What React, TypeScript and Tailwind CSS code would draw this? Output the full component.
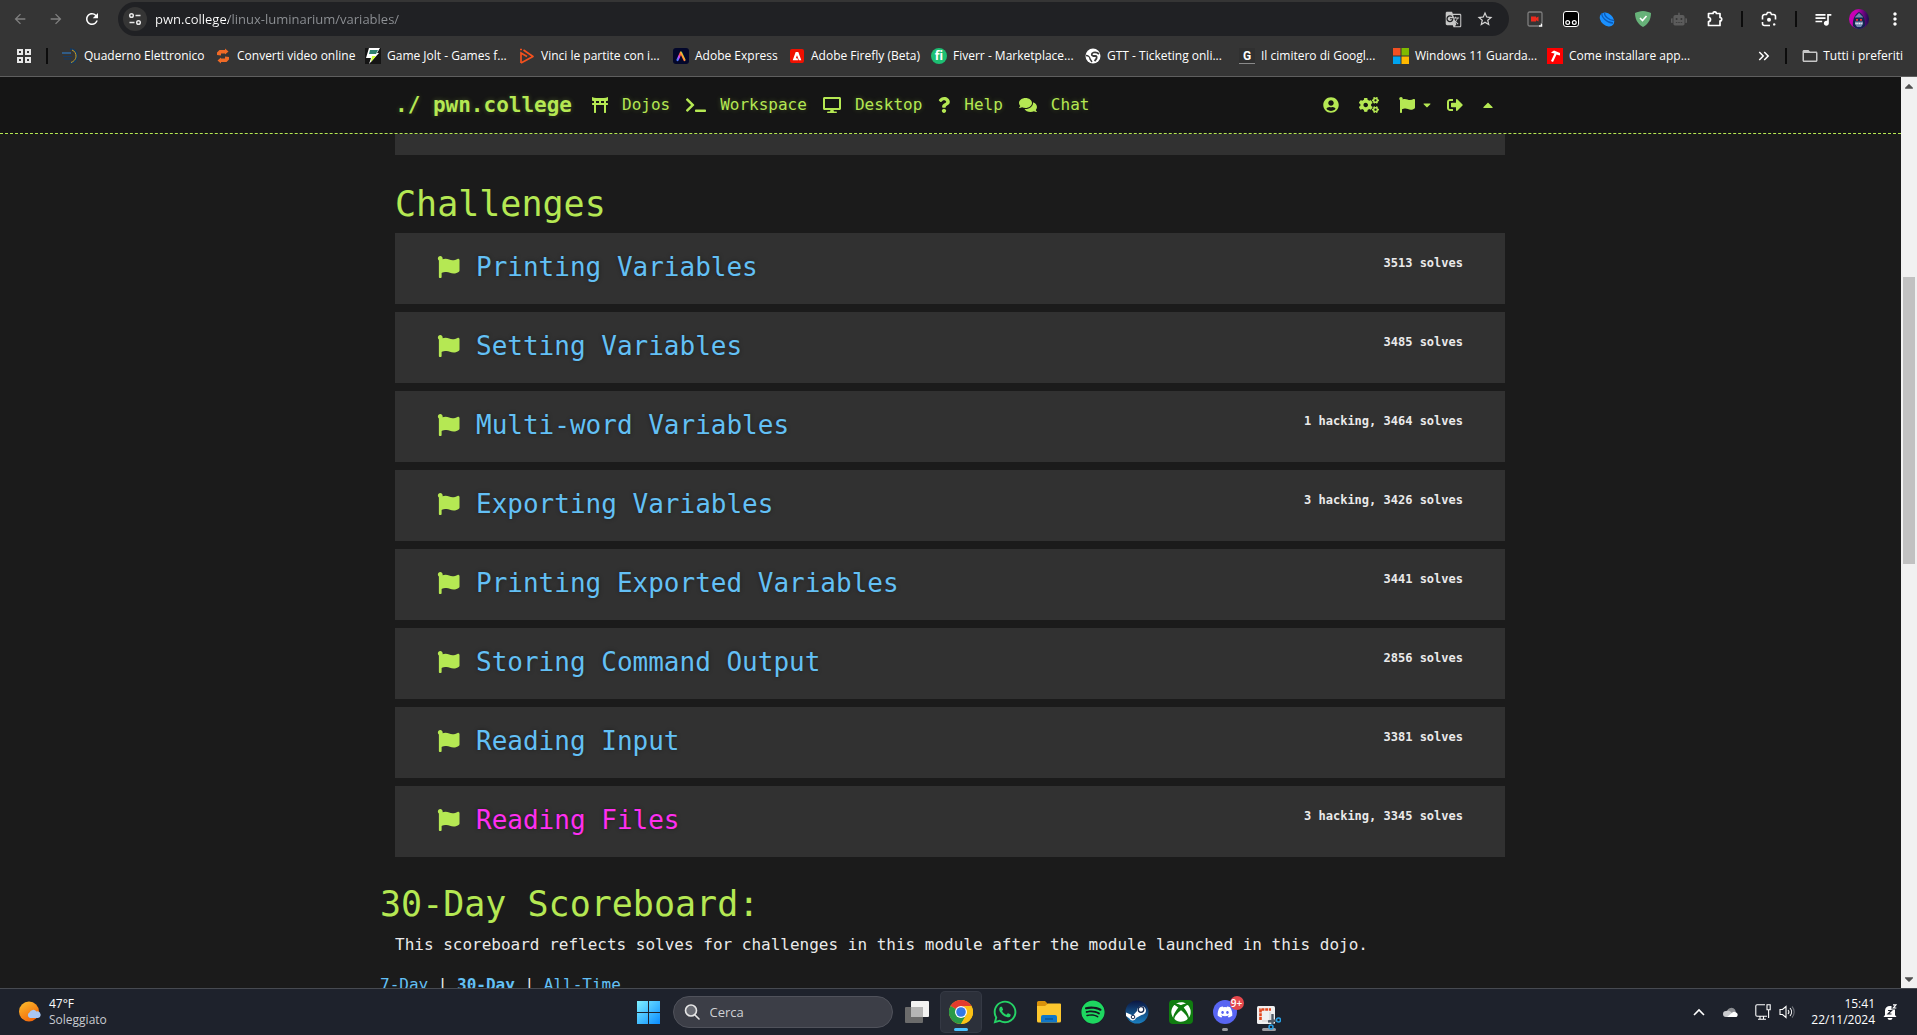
import React from "react";
import {
  FaToriiGate, FaTerminal, FaDesktop, FaQuestion, FaComments, FaUserCircle, FaCogs,
  FaFlag, FaSignOutAlt, FaCaretDown, FaCaretUp, FaWhatsapp, FaSpotify, FaDiscord,
  FaXbox, FaRobot,
} from "react-icons/fa";
import {
  MdArrowBack, MdArrowForward, MdRefresh, MdGTranslate, MdStarBorder,
  MdQueueMusic, MdMoreVert, MdKeyboardDoubleArrowRight, MdFolderOpen,
} from "react-icons/md";

const challenges = [
  { name: "Printing Variables", stats: "3513 solves" },
  { name: "Setting Variables", stats: "3485 solves" },
  { name: "Multi-word Variables", stats: "1 hacking, 3464 solves" },
  { name: "Exporting Variables", stats: "3 hacking, 3426 solves" },
  { name: "Printing Exported Variables", stats: "3441 solves" },
  { name: "Storing Command Output", stats: "2856 solves" },
  { name: "Reading Input", stats: "3381 solves" },
  { name: "Reading Files", stats: "3 hacking, 3345 solves", active: true },
];

function QuadernoIcon() {
  return (
    <svg viewBox="0 0 16 16" className="size-4" fill="none">
      <path d="M8 1c5 0 7 3 7 7s-2 7-7 7" stroke="#123a66" strokeWidth="1.5" />
      <path d="M10 2c3 1 4 4 4 6s-1 5-5 6.500" stroke="#c9a227" strokeWidth="1" />
      <path d="M0 5h9" stroke="#2f78c0" strokeWidth="1.200" />
      <path d="M1 8.500h9M2 11h7" stroke="#173b63" strokeWidth="1.200" />
    </svg>
  );
}
function ConvertIcon() {
  return (
    <svg viewBox="0 0 16 16" className="size-4" fill="#f06a26">
      <path d="M2 4.500L4.500 2H10V.5l3.500 3L10 6.500V5.500H6v2L2 7z" />
      <path d="M14 11.500L11.500 14H6v1.500L2.500 12.500 6 9.500v1h4V8.500l4 .5z" />
    </svg>
  );
}
function JoltIcon() {
  return (
    <svg viewBox="0 0 16 16" className="size-4">
      <rect width="16" height="16" fill="#151515" />
      <path d="M4 0h11l-3 5h2L4 16l2-6H1z" fill="#fff" />
      <path d="M5 2h8l-2 4H4z" fill="#2f7f6f" />
      <path d="M7 8h4l-5 6z" fill="#cf3" />
    </svg>
  );
}
function VinciIcon() {
  return (
    <svg viewBox="0 0 16 16" className="size-4" fill="none" stroke="#f4511e" strokeWidth="1.700">
      <path d="M2 15V5l6 3.500" />
      <path d="M2 15l12-6.500L4.500 2" strokeLinejoin="round" />
      <path d="M1 1.500h2" />
    </svg>
  );
}
function ExpressIcon() {
  return (
    <svg viewBox="0 0 16 16" className="size-4">
      <defs>
        <linearGradient id="adx" x1="0" y1="1" x2="1" y2="0.400">
          <stop offset="0" stopColor="#4d7bff" />
          <stop offset="0.350" stopColor="#c84bff" />
          <stop offset="0.550" stopColor="#ff4b4b" />
          <stop offset="0.800" stopColor="#ffb02e" />
          <stop offset="1" stopColor="#33d17a" />
        </linearGradient>
      </defs>
      <rect width="16" height="16" rx="3" fill="#03072b" />
      <path d="M4.500 12L8 4.500l3.500 7.500" fill="none" stroke="url(#adx)" strokeWidth="2.200" strokeLinecap="round" strokeLinejoin="round" />
    </svg>
  );
}
function FireflyIcon() {
  return (
    <svg viewBox="0 0 16 16" className="size-4">
      <rect x="1" y="1" width="14" height="14" rx="2" fill="#f01000" />
      <path d="M6.700 4h2.600l3 8.200H9.900L8 7.300l-1.200 3h1.600l.8 1.900H3.700z" fill="#fff" />
    </svg>
  );
}
function FiverrIcon() {
  return (
    <span className="flex size-4 items-center justify-center rounded-full bg-[#1dbf73] font-['Open_Sans'] text-[12px] leading-4 font-bold text-white">fi</span>
  );
}
function GlobeIcon() {
  return (
    <svg viewBox="0 0 16 16" className="size-4">
      <circle cx="8" cy="8" r="7.500" fill="#fff" />
      <path d="M14 6c-2-2-3.500-2-5.500-1.500S6 7.500 8 8h3c1.500 1 .5 3-1.500 5" fill="none" stroke="#3a3a3a" strokeWidth="1.800" />
      <path d="M1 7.500c2 0 4 1.500 4 3.500l2 3" fill="none" stroke="#3a3a3a" strokeWidth="1.400" />
    </svg>
  );
}
function GraveIcon() {
  return (
    <span className="flex size-4 items-center justify-center border-b border-[#8a8a8a] bg-[#303030] font-['Roboto'] text-[12px] leading-none font-bold text-white">G</span>
  );
}
function MicrosoftIcon() {
  return (
    <svg viewBox="0 0 16 16" className="size-4">
      <path d="M0 0h7.500v7.500H0z" fill="#f25022" />
      <path d="M8.500 0H16v7.500H8.500z" fill="#7fba00" />
      <path d="M0 8.500h7.500V16H0z" fill="#00a4ef" />
      <path d="M8.500 8.500H16V16H8.500z" fill="#ffb900" />
    </svg>
  );
}
function HammerIcon() {
  return (
    <svg viewBox="0 0 16 16" className="size-4">
      <rect width="16" height="16" fill="#ff0000" />
      <path d="M4 4.500L7 2.500l6 2.500v2.500L11 7 9.500 6.500 6 14l-2-1 3.500-7.500L5 5z" fill="#fff" />
    </svg>
  );
}

const bookmarks = [
  { label: "Quaderno Elettronico", icon: <QuadernoIcon />, width: "w-[153px]" },
  { label: "Converti video online", icon: <ConvertIcon />, width: "w-[150px]" },
  { label: "Game Jolt - Games f...", icon: <JoltIcon />, width: "w-[154px]" },
  { label: "Vinci le partite con i...", icon: <VinciIcon />, width: "w-[154px]" },
  { label: "Adobe Express", icon: <ExpressIcon />, width: "w-[116px]" },
  { label: "Adobe Firefly (Beta)", icon: <FireflyIcon />, width: "w-[142px]" },
  { label: "Fiverr - Marketplace...", icon: <FiverrIcon />, width: "w-[154px]" },
  { label: "GTT - Ticketing onli...", icon: <GlobeIcon />, width: "w-[154px]" },
  { label: "Il cimitero di Googl...", icon: <GraveIcon />, width: "w-[154px]" },
  { label: "Windows 11 Guarda...", icon: <MicrosoftIcon />, width: "w-[154px]" },
  { label: "Come installare app...", icon: <HammerIcon />, width: "w-[154px]" },
];

function ToolButton({ label, children }: { label: string; children: React.ReactNode }) {
  return (
    <button type="button" aria-label={label} className="flex h-8 w-9 shrink-0 items-center justify-center">
      {children}
    </button>
  );
}

function BrowserChrome() {
  return (
    <div className="shrink-0 border-b border-[#5f5f5f] bg-[#353535] font-['Open_Sans',sans-serif] text-white">
      <div className="flex h-[38px] items-center pr-1 pl-0.5">
        <ToolButton label="Indietro"><MdArrowBack className="size-4 text-[#808080]" /></ToolButton>
        <ToolButton label="Avanti"><MdArrowForward className="size-4 text-[#808080]" /></ToolButton>
        <ToolButton label="Ricarica"><MdRefresh className="size-[18px]" /></ToolButton>
        <div className="ml-2 flex h-[34px] min-w-0 flex-1 items-center rounded-full bg-[#202124] pr-2 pl-[5px]">
          <button type="button" aria-label="Informazioni sul sito" className="flex size-6 shrink-0 items-center justify-center rounded-full bg-[#353535]">
            <svg viewBox="0 0 16 16" className="size-4" fill="none" stroke="#e8e8e8" strokeWidth="1.500">
              <circle cx="4.500" cy="4.500" r="1.800" />
              <path d="M8.500 4.500h5M2.500 11.500h5" />
              <circle cx="11.500" cy="11.500" r="1.800" />
            </svg>
          </button>
          <input
            aria-label="Barra degli indirizzi"
            defaultValue="pwn.college/linux-luminarium/variables/"
            className="ml-2 min-w-0 flex-1 bg-[linear-gradient(90deg,#ffffff_74px,#8f9296_74px)] bg-clip-text text-[13px] leading-5 text-transparent outline-none"
          />
          <button type="button" aria-label="Traduci" className="flex size-8 items-center justify-center"><MdGTranslate className="size-[17px] text-[#c7c7c7]" /></button>
          <button type="button" aria-label="Aggiungi ai preferiti" className="flex size-8 items-center justify-center"><MdStarBorder className="size-[18px] text-[#d5d5d5]" /></button>
        </div>
        <div className="ml-2 flex items-center">
          <ToolButton label="Registratore">
            <svg viewBox="0 0 16 16" className="size-4" fill="none">
              <path d="M12 15H2.500A1.500 1.500 0 011 13.500v-11A1.500 1.500 0 012.500 1h11A1.500 1.500 0 0115 2.500V12" stroke="#7d7d7d" strokeWidth="1.300" />
              <path d="M12 15h2.500v-2.500" stroke="#fff" strokeWidth="1.500" />
              <path d="M4 5.500h5v1.200l2.500-1.200v5L9 9.300v1.200H4z" fill="#ee2a1d" />
            </svg>
          </ToolButton>
          <ToolButton label="Tampermonkey">
            <svg viewBox="0 0 16 16" className="size-4" fill="none">
              <rect x="0.500" y="0.500" width="15" height="15" rx="2.500" fill="#000" stroke="#fff" />
              <circle cx="4.700" cy="11.500" r="1.900" stroke="#fff" strokeWidth="1.200" />
              <circle cx="11.300" cy="11.500" r="1.900" stroke="#fff" strokeWidth="1.200" />
            </svg>
          </ToolButton>
          <ToolButton label="Estensione">
            <svg viewBox="0 0 16 16" className="size-4">
              <ellipse cx="8" cy="8.500" rx="8" ry="6" transform="rotate(40 8 8.500)" fill="#1a90ff" />
              <path d="M3 2c-1 4 5 10 11 10M5.500 1.500C5 5 10 9.500 15 9.500" stroke="#0c5cb8" strokeWidth="1.300" fill="none" />
            </svg>
          </ToolButton>
          <ToolButton label="AdGuard">
            <svg viewBox="0 0 16 16" className="size-4">
              <path d="M8 0c3 .3 5.500 1 8 2-.2 6-2 10.500-8 14C2 12.500.2 8 0 2c2.500-1 5-1.700 8-2z" fill="#67b279" />
              <path d="M5 7l2.500 2.500L11.500 5" stroke="#fff" strokeWidth="1.600" fill="none" />
            </svg>
          </ToolButton>
          <ToolButton label="Robot"><FaRobot className="size-4 text-[#5c5c5c]" /></ToolButton>
          <ToolButton label="Estensioni">
            <svg viewBox="0 0 16 16" className="size-4" fill="none" stroke="#fff" strokeWidth="1.700" strokeLinejoin="round">
              <path d="M1.500 2.500H6a1.700 1.700 0 013.400 0h3.600v4a1.700 1.700 0 010 3.400v4.600H1.500v-4a2 2 0 000-4z" />
            </svg>
          </ToolButton>
          <span className="mx-2 h-4 w-0.5 bg-[#0c0c0c]" />
          <ToolButton label="Cerca con Lens">
            <svg viewBox="0 0 16 16" className="size-4" fill="none" stroke="#fff" strokeWidth="1.600">
              <path d="M1.500 8.500V5.500a2 2 0 012-2h2l1-2h3l1 2h2a2 2 0 012 2v3M1.500 11v1.500a2 2 0 002 2H9" />
              <circle cx="8" cy="8.700" r="2" fill="#fff" stroke="none" />
              <circle cx="13.200" cy="13.400" r="1.200" fill="#fff" stroke="none" />
            </svg>
          </ToolButton>
          <span className="mx-2 h-4 w-0.5 bg-[#0c0c0c]" />
          <ToolButton label="Controlli multimediali"><MdQueueMusic className="size-5" /></ToolButton>
          <ToolButton label="Profilo">
            <svg viewBox="0 0 20 20" className="size-5">
              <defs>
                <linearGradient id="av" x1="0" x2="1"><stop offset="0.400" stopColor="#c800b4" /><stop offset="1" stopColor="#1b0b50" /></linearGradient>
              </defs>
              <circle cx="10" cy="10" r="10" fill="url(#av)" />
              <path d="M4 17c-1-6 2-12 6-14 4 2 7 8 6 14-3 4-9 4-12 0z" fill="#15254f" />
              <path d="M6 8l4-4 4 4v7l-2 3H8l-2-3z" fill="#7288ae" />
              <path d="M5.500 8.500h9v4h-9z" fill="#15254f" />
              <path d="M7 10h2v1.700H7zM11 10h2v1.700h-2z" fill="#ef3030" />
              <path d="M6.500 14.500h7" stroke="#eef2f8" strokeWidth="1.700" strokeDasharray="1.200 .5" />
            </svg>
          </ToolButton>
          <ToolButton label="Menu"><MdMoreVert className="size-5" /></ToolButton>
        </div>
      </div>
      <div className="flex h-[38px] items-center pb-0.5 text-[12px] leading-4">
        <button type="button" aria-label="App" className="ml-4 flex size-4 shrink-0 items-center justify-center">
          <svg viewBox="0 0 14 14" className="size-3.5" fill="none" stroke="#e8e8e8" strokeWidth="2">
            <path d="M1 1h4v4H1zM9 1h4v4H9zM1 9h4v4H1zM9 9h4v4H9z" />
          </svg>
        </button>
        <span className="mr-3.5 ml-3.5 h-4 w-0.5 shrink-0 bg-[#0c0c0c]" />
        <nav className="flex min-w-0 flex-1 overflow-hidden">
          {bookmarks.map((b) => (
            <a key={b.label} href="#" className={"flex shrink-0 items-center gap-[6px] whitespace-nowrap " + b.width}>
              <span className="size-4 shrink-0">{b.icon}</span>
              <span>{b.label}</span>
            </a>
          ))}
        </nav>
        <button type="button" aria-label="Altri preferiti" className="shrink-0"><MdKeyboardDoubleArrowRight className="size-[18px]" /></button>
        <span className="mr-3.5 ml-3 h-4 w-0.5 shrink-0 bg-[#0c0c0c]" />
        <button type="button" className="mr-3.5 flex shrink-0 items-center gap-1">
          <MdFolderOpen className="size-[18px] text-[#c7c7c7]" />
          Tutti i preferiti
        </button>
      </div>
    </div>
  );
}

const glow = "[text-shadow:0_1px_1px_rgba(0,0,0,0.1),0_0_5px_rgba(181,232,83,0.3)]";

const navLinks = [
  { label: "Dojos", icon: <FaToriiGate className="w-4" /> },
  { label: "Workspace", icon: <FaTerminal className="w-5" /> },
  { label: "Desktop", icon: <FaDesktop className="w-[18px]" /> },
  { label: "Help", icon: <FaQuestion className="w-3" /> },
  { label: "Chat", icon: <FaComments className="w-[18px]" /> },
];

function Navbar() {
  return (
    <header className="shrink-0 border-b border-dashed border-[#b5e853] bg-[#151515]">
      <div className="mx-auto flex h-14 max-w-[1141px] items-center pr-7 pl-[15px] text-[16px] leading-6 text-[#b5e853]">
        <a href="#" className={"mr-5 text-[21px] leading-8 font-bold whitespace-pre " + glow}>./ pwn.college</a>
        <nav className="flex items-center gap-4">
          {navLinks.map((l) => (
            <a key={l.label} href="#" className={"flex items-center gap-3.5 " + glow}>
              {l.icon}
              {l.label}
            </a>
          ))}
        </nav>
        <div className="ml-auto flex items-center gap-5">
          <a href="#" aria-label="Profile"><FaUserCircle /></a>
          <a href="#" aria-label="Settings"><FaCogs className="w-5" /></a>
          <button type="button" aria-label="Submit flag" className="flex items-center gap-2">
            <FaFlag />
            <FaCaretDown className="h-3 w-2" />
          </button>
          <a href="#" aria-label="Log out" className="-ml-1"><FaSignOutAlt /></a>
          <button type="button" aria-label="Hide navbar"><FaCaretUp className="w-2.5" /></button>
        </div>
      </div>
    </header>
  );
}

function Page() {
  return (
    <div className="flex min-h-0 flex-1 bg-[#1b1b1b] font-['DejaVu_Sans_Mono',monospace]">
      <div className="flex min-w-0 flex-1 flex-col overflow-hidden">
        <Navbar />
        <main className="mx-auto min-h-0 w-full max-w-[1141px] flex-1 overflow-hidden pr-4 pl-[15px] text-[#eaeaea]">
          <div className="h-[21px] bg-[#313131]" />
          <h2 className="mt-7 text-[35px] leading-[42px] text-[#b5e853]">Challenges</h2>
          <ul className="mt-2 flex flex-col gap-2">
            {challenges.map((c) => (
              <li key={c.name} className="flex items-start justify-between bg-[#313131] px-[42px] pt-[18px] pb-[21px]">
                <a href="#" className={"flex items-center gap-4 text-[26px] leading-8 [text-shadow:0_0_4px_rgba(0,0,0,0.4)] " + (c.active ? "text-[#ff2ff0]" : "text-[#63c0f5]")}>
                  <FaFlag className="size-[23px] pb-px text-[#b5e853]" />
                  {c.name}
                </a>
                <span className="pt-0.5 text-[12px] leading-5 font-bold">{c.stats}</span>
              </li>
            ))}
          </ul>
          <section className="-ml-[15px] pt-[26px]">
            <h2 className="text-[35px] leading-[42px] text-[#b5e853]">30-Day Scoreboard:</h2>
            <p className="mt-2 ml-[15px] text-[16px] leading-6">
              This scoreboard reflects solves for challenges in this module after the module launched in this dojo.
            </p>
            <p className="mt-4 text-[16px] leading-6">
              <a href="#" className="text-[#63c0f5]">7-Day</a> | <a href="#" className="font-bold text-[#63c0f5]">30-Day</a> |{" "}
              <a href="#" className="text-[#63c0f5]">All-Time</a>
            </p>
          </section>
        </main>
      </div>
      <div aria-hidden="true" className="flex w-4 shrink-0 flex-col items-center bg-[#f1f1f1] text-[#505050]">
        <FaCaretUp className="my-0.5 size-3.5" />
        <div className="flex min-h-0 w-full flex-1 flex-col px-0.5">
          <div className="flex-[182]" />
          <div className="flex-[287] bg-[#c1c1c1]" />
          <div className="flex-[406]" />
        </div>
        <FaCaretDown className="my-0.5 size-3.5" />
      </div>
    </div>
  );
}

function TaskButton({ label, active, children }: { label: string; active?: boolean; children: React.ReactNode }) {
  return (
    <button
      type="button"
      aria-label={label}
      className={"relative flex size-10 items-center justify-center rounded " + (active ? "bg-[#2c303a] ring-1 ring-[#353944]" : "")}
    >
      {children}
    </button>
  );
}

function Taskbar() {
  return (
    <footer className="grid h-[47px] shrink-0 grid-cols-[1fr_auto_1fr] items-center border-t border-[#474a51] bg-[#1e222c] font-['Open_Sans',sans-serif] text-[12px] leading-4 text-white">
      <button type="button" className="flex items-center gap-2 justify-self-start pl-[18px] text-left">
        <svg viewBox="0 0 23 22" className="h-[22px] w-[23px]">
          <defs>
            <linearGradient id="sun" x1="0" y1="0" x2="0.600" y2="1"><stop offset="0" stopColor="#fbc02d" /><stop offset="1" stopColor="#f4680b" /></linearGradient>
          </defs>
          <circle cx="11" cy="10.500" r="10" fill="url(#sun)" />
          <path d="M12 17a3 3 0 01-.5-5.500 4 4 0 017-1A3.300 3.300 0 0120 17z" fill="#a9c8f5" />
        </svg>
        <span>
          <span className="block">47°F</span>
          <span className="block text-[#c8cad0]">Soleggiato</span>
        </span>
      </button>

      <div className="flex items-center gap-1">
        <TaskButton label="Start">
          <svg viewBox="0 0 23 23" className="size-[23px]">
            <defs>
              <linearGradient id="win" x1="0" y1="0" x2="1" y2="1"><stop offset="0" stopColor="#7ff0ff" /><stop offset="1" stopColor="#0a8cff" /></linearGradient>
            </defs>
            <path d="M0 0h11v11H0zM12 0h11v11H12zM0 12h11v11H0zM12 12h11v11H12z" fill="url(#win)" />
          </svg>
        </TaskButton>
        <label className="flex h-8 w-[220px] items-center gap-2.5 rounded-full border border-[#50525b] bg-[#3c3e47] px-2.5">
          <svg viewBox="0 0 16 16" className="size-4 shrink-0" fill="#6a6c74" stroke="#e6e6e6" strokeWidth="1.600">
            <circle cx="7" cy="6.500" r="5.500" />
            <path d="M11 11l4 4" strokeLinecap="round" />
          </svg>
          <input aria-label="Cerca" placeholder="Cerca" className="w-full min-w-0 bg-transparent text-[13px] outline-none placeholder:text-[#d0d1d4]" />
        </label>
        <TaskButton label="Visualizzazione attività">
          <svg viewBox="0 0 24 22" className="h-[22px] w-6">
            <rect x="6" y="0" width="18" height="16" rx="1" fill="#f2f2f2" />
            <rect x="0" y="6" width="18" height="16" rx="1" fill="#6b6b6b" />
            <path d="M6 6h12v10H6z" fill="#b5b5b5" />
          </svg>
        </TaskButton>
        <TaskButton label="Google Chrome" active>
          <svg viewBox="0 0 24 24" className="size-6">
            <circle cx="12" cy="12" r="12" fill="#fbc116" />
            <path d="M12 12L1.600 6A12 12 0 0122.400 6z" fill="#e33b2e" />
            <path d="M12 12L1.600 6A12 12 0 0012 24l5.200-9z" fill="#2a9a47" />
            <path d="M12 6h10.400A12 12 0 0112 24l5.200-9A6 6 0 0012 6z" fill="#fbc116" />
            <circle cx="12" cy="12" r="6" fill="#fff" />
            <circle cx="12" cy="12" r="4.800" fill="#3478e6" />
          </svg>
          <span className="absolute bottom-px h-[3px] w-3.5 rounded-full bg-[#4cc2ff]" />
        </TaskButton>
        <TaskButton label="WhatsApp"><FaWhatsapp className="size-[26px] text-[#25d366]" /></TaskButton>
        <TaskButton label="Esplora file">
          <svg viewBox="0 0 24 22" className="h-[22px] w-6">
            <path d="M0 1.500A1.500 1.500 0 011.500 0H8l3 3v3H0z" fill="#d9920b" />
            <path d="M0 5h8l3-2.500h12a1 1 0 011 1V20a1.500 1.500 0 01-1.500 1.500h-21A1.500 1.500 0 010 20z" fill="#fdc72e" />
            <path d="M4 21.500V16a2 2 0 012-2h12a2 2 0 012 2v5.500z" fill="#1177c8" />
            <path d="M8 18h8" stroke="#0b5697" strokeWidth="1.500" />
          </svg>
        </TaskButton>
        <TaskButton label="Spotify">
          <span className="flex rounded-full bg-[#14171f]"><FaSpotify className="size-6 text-[#1ed760]" /></span>
        </TaskButton>
        <TaskButton label="Steam">
          <svg viewBox="0 0 24 24" className="size-6">
            <defs>
              <linearGradient id="stm" x1="0" y1="0" x2="0" y2="1"><stop offset="0" stopColor="#0b1540" /><stop offset="1" stopColor="#1a7fc0" /></linearGradient>
            </defs>
            <circle cx="12" cy="12" r="11.500" fill="url(#stm)" />
            <path d="M1 12.500l7 3 4-4.500a4.500 4.500 0 114.500 4L11 18a3.500 3.500 0 01-6.500.5L1 16z" fill="#fff" />
            <circle cx="16" cy="9.500" r="2.800" fill="#fff" stroke="#16294f" strokeWidth="1.300" />
            <circle cx="8" cy="17" r="1.800" fill="none" stroke="#16294f" />
          </svg>
        </TaskButton>
        <TaskButton label="Xbox">
          <span className="flex size-6 items-center justify-center rounded-sm bg-[#107c10]"><FaXbox className="size-5 text-white" /></span>
        </TaskButton>
        <TaskButton label="Discord">
          <span className="flex size-6 items-center justify-center rounded-full bg-[#5865f2]"><FaDiscord className="size-4 text-white" /></span>
          <span className="absolute top-1 right-px flex size-3.5 items-center justify-center rounded-full bg-[#e5484d] text-[10px] leading-none font-semibold">9+</span>
          <span className="absolute bottom-px h-[3px] w-1.5 rounded-full bg-[#9a9ba0]" />
        </TaskButton>
        <TaskButton label="Strumento di cattura">
          <span className="absolute bottom-px h-[3px] w-3.5 rounded-full bg-[#9a9ba0]" />
          <svg viewBox="0 0 24 24" className="relative mt-3 size-6">
            <rect x="0" y="0" width="18" height="18" rx="1.500" fill="#f0f0f0" />
            <path d="M3.500 14V3.500H14" fill="none" stroke="#e2451c" strokeWidth="2.600" strokeDasharray="3 .8" />
            <path d="M5 15h8V6" fill="none" stroke="#cfcfcf" strokeWidth="1" />
            <path d="M11 15.500l9-1M15.500 8v10" stroke="#4f5965" strokeWidth="2.400" />
            <circle cx="21.500" cy="14" r="2" fill="none" stroke="#27a0e6" strokeWidth="1.500" />
            <circle cx="14" cy="21" r="2" fill="none" stroke="#27a0e6" strokeWidth="1.500" />
          </svg>
        </TaskButton>
      </div>

      <div className="flex items-center justify-self-end pr-5">
        <button type="button" aria-label="Mostra icone nascoste" className="mr-[18px]">
          <svg viewBox="0 0 12 8" className="h-2 w-3" fill="none" stroke="#fff" strokeWidth="1.600"><path d="M1 7l5-5 5 5" /></svg>
        </button>
        <button type="button" aria-label="OneDrive" className="mr-4">
          <svg viewBox="0 0 16 12" className="h-3 w-4">
            <path d="M4 7a4.500 4.500 0 018-3.500L14 9z" fill="#8b8d92" />
            <path d="M3 11a3 3 0 010-6 4 4 0 015 1l5 5z" fill="#c9cacd" />
            <path d="M4 11l6-5a3 3 0 013 .5A2.500 2.500 0 0113.500 11z" fill="#fff" />
          </svg>
        </button>
        <button type="button" aria-label="Rete e volume" className="mr-4 flex items-center gap-2">
          <svg viewBox="0 0 16 16" className="size-4" fill="none" stroke="#fff" strokeWidth="1.100">
            <path d="M10 .8H2a1.200 1.200 0 00-1.200 1.200v9A1.200 1.200 0 002 12.200h10M5 12v3M8.500 12v3M3 15.300h8M12 .8h3.200v5H12zM13.600 6v8" />
          </svg>
          <svg viewBox="0 0 16 16" className="size-4" fill="none" stroke="#fff" strokeWidth="1.100">
            <path d="M1 5.500h2.500L7 2.500v11l-3.500-3H1zM9 6a3 3 0 010 4M11 4a6 6 0 010 8" />
            <path d="M13 2.500a8 8 0 010 11" stroke="#6a6d75" />
          </svg>
        </button>
        <button type="button" className="mr-2 text-right">
          <span className="block">15:41</span>
          <span className="block">22/11/2024</span>
        </button>
        <button type="button" aria-label="Notifiche">
          <svg viewBox="0 0 14 16" className="h-4 w-3.5">
            <path d="M2 11V6.500A5 5 0 017 2h1.500v3.500H12V11l1.500 2H.5z" fill="#fff" />
            <path d="M4.500 14h5a2.500 2 0 01-5 0z" fill="#fff" />
            <path d="M10 .8h3L10.300 4h3" fill="none" stroke="#fff" strokeWidth="1.200" />
            <path d="M5 6.500h3.500L5 10h3.500" fill="none" stroke="#1e222c" strokeWidth="1.200" />
          </svg>
        </button>
      </div>
    </footer>
  );
}

export default function App() {
  return (
    <div className="flex h-screen flex-col overflow-hidden">
      <BrowserChrome />
      <Page />
      <Taskbar />
    </div>
  );
}
